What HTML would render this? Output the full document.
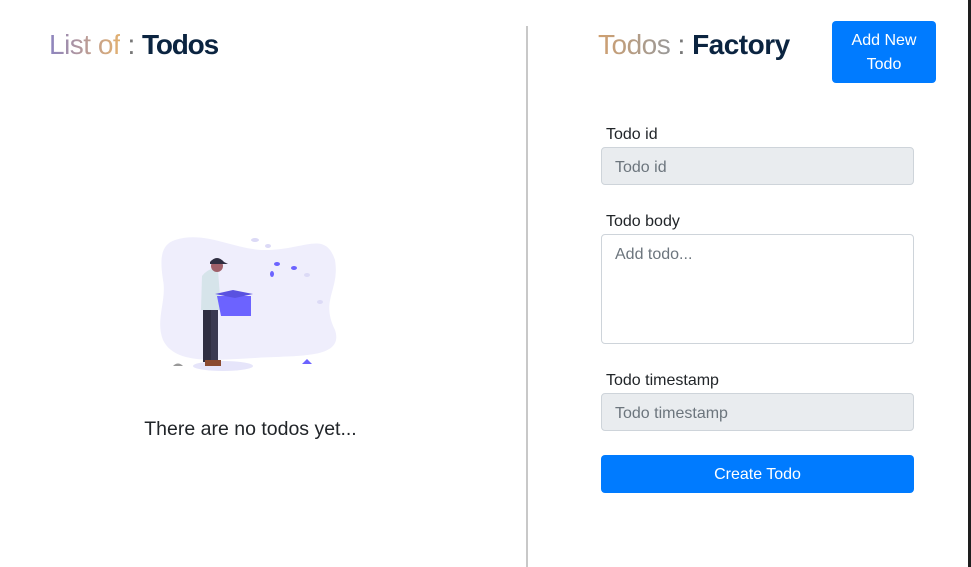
<!DOCTYPE html>
<html><head><meta charset="utf-8"><style>
*{box-sizing:border-box;margin:0;padding:0}
body{width:971px;height:567px;background:#fff;font-family:"Liberation Sans",sans-serif;position:relative;overflow:hidden}
.a{position:absolute}
h1{position:absolute;font-size:28px;font-weight:300;white-space:nowrap;letter-spacing:-0.5px;color:#777}
h1 .g{background:linear-gradient(90deg,#8c84c0,#e2b070);-webkit-background-clip:text;color:transparent}
h1 b{color:#0b2440;font-weight:700}
.lbl{position:absolute;left:606px;font-size:16px;color:#212529}
.inp{position:absolute;left:601px;width:313px;border:1px solid #ced4da;border-radius:4px;font-size:16px;color:#6c757d;padding:0 13px}
.btn{position:absolute;background:#007bff;color:#fff;border-radius:4px;text-align:center;font-size:16px}
</style></head><body>
<h1 style="left:49px;top:29px"><span class="g">List of</span> : <b style="letter-spacing:-1.2px">Todos</b></h1>
<div class="a" style="left:526px;top:26px;width:2px;height:541px;background:#c8c8c8"></div>
<h1 style="left:598px;top:29px"><span class="g" style="background:linear-gradient(90deg,#d0a070,#999);-webkit-background-clip:text;color:transparent">Todos</span> : <b>Factory</b></h1>
<div class="btn" style="left:832px;top:21px;width:104px;height:62px;line-height:24px;padding-top:8px">Add New<br>Todo</div>
<div class="a" style="left:968px;top:0;width:3px;height:567px;background:#1e1e1e"></div>

<svg class="a" style="left:155px;top:230px" width="190" height="150" viewBox="0 0 190 150">
<path d="M20 10 C50 0 80 20 110 20 C150 20 170 0 180 30 C185 60 165 70 180 100 C190 130 140 125 100 128 C60 130 20 135 8 110 C0 90 12 70 8 50 C5 30 5 15 20 10Z" fill="#efeefc"/>
<ellipse cx="68" cy="136" rx="30" ry="5" fill="#e6e5fa"/>
<path d="M18 136 q5 -5 10 0z" fill="#999"/>
<path d="M147 134 l5 -5 l5 5z" fill="#6c63ff"/>
<rect x="48" y="74" width="8" height="58" fill="#2f2e41"/><rect x="56" y="74" width="7" height="56" fill="#3a3950"/>
<rect x="50" y="130" width="16" height="6" fill="#8a4a30"/>
<path d="M47 46 q8 -10 16 -6 l3 40 h-20z" fill="#d6e4ea"/>
<circle cx="62" cy="36" r="6" fill="#a0616a"/>
<path d="M55 32 q7 -8 14 0 l4 2 h-18z" fill="#2f2e41"/>
<path d="M62 66 h34 v20 h-30z" fill="#6c63ff"/><path d="M60 64 l18 -4 l20 4 l-18 4z" fill="#5a52e0"/>
<g fill="#6c63ff"><ellipse cx="122" cy="34" rx="3" ry="2"/><ellipse cx="139" cy="38" rx="3" ry="2"/><ellipse cx="117" cy="44" rx="2" ry="3"/></g>
<g fill="#dcdaf6"><ellipse cx="100" cy="10" rx="4" ry="2"/><ellipse cx="113" cy="16" rx="3" ry="2"/><ellipse cx="152" cy="45" rx="3" ry="2"/><ellipse cx="165" cy="72" rx="3" ry="2"/></g>
</svg>
<div class="a" style="left:2px;width:497px;top:418px;text-align:center;font-size:19.5px;color:#212529">There are no todos yet...</div>

<div class="lbl" style="top:126px">Todo id</div>
<div class="inp" style="top:147px;height:38px;line-height:39px;background:#e9ecef">Todo id</div>
<div class="lbl" style="top:213px">Todo body</div>
<div class="inp" style="top:234px;height:110px;padding-top:9px;line-height:22px;background:#fff">Add todo...</div>
<div class="lbl" style="top:372px">Todo timestamp</div>
<div class="inp" style="top:393px;height:38px;line-height:39px;background:#e9ecef">Todo timestamp</div>
<div class="btn" style="left:601px;top:455px;width:313px;height:38px;line-height:40px">Create Todo</div>
</body></html>
